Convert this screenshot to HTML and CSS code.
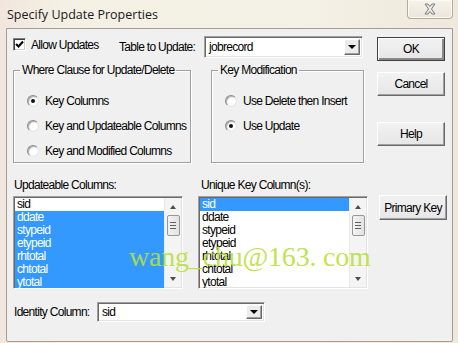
FILE: index.html
```html
<!DOCTYPE html>
<html>

<head>
    <title>Specify Update Properties</title>
    <link rel="stylesheet" href="styles.css">
</head>

<body>
    <div class="window">
        <div class="titlebar">
            <span class="title">Specify Update Properties</span>
            <div class="close">
                <svg width="14" height="12" viewBox="0 0 14 12">
                    <path d="M2 1 L5 1 L7 3.5 L9 1 L12 1 L8.5 6 L12 11 L9 11 L7 8.5 L5 11 L2 11 L5.5 6 Z" fill="#e8e8e8" stroke="#7c7c7c" stroke-width="1" stroke-linejoin="round" />
                </svg>
            </div>
        </div>
        <div class="client">
            <div class="row row-top">
                <label class="allow">
                    <span class="checkbox">
                        <svg width="9" height="9" viewBox="0 0 9 9">
                            <path d="M1 4 L3.5 6.5 L8 1.5" fill="none" stroke="#000" stroke-width="2" />
                        </svg>
                    </span>
                    Allow Updates
                </label>
                <span class="field-label table-label">Table to Update:</span>
                <div class="combo table-combo">
                    <span class="combo-value">jobrecord</span>
                    <span class="combo-btn"><span class="arrow-down"></span></span>
                </div>
                <button class="btn btn-default">OK</button>
            </div>

            <div class="row row-groups">
                <fieldset class="group where">
                    <legend>Where Clause for Update/Delete</legend>
                    <div class="options">
                        <label class="option"><span class="radio checked"></span>Key Columns</label>
                        <label class="option"><span class="radio"></span>Key and Updateable Columns</label>
                        <label class="option"><span class="radio"></span>Key and Modified Columns</label>
                    </div>
                </fieldset>
                <fieldset class="group keymod">
                    <legend>Key Modification</legend>
                    <div class="options">
                        <label class="option"><span class="radio"></span>Use Delete then Insert</label>
                        <label class="option"><span class="radio checked"></span>Use Update</label>
                    </div>
                </fieldset>
                <div class="btn-stack">
                    <button class="btn">Cancel</button>
                    <button class="btn btn-help">Help</button>
                </div>
            </div>

            <div class="row row-lists">
                <div class="list-col">
                    <div class="list-label">Updateable Columns:</div>
                    <div class="listbox">
                        <ul class="items">
                            <li>sid</li>
                            <li class="sel">ddate</li>
                            <li class="sel">stypeid</li>
                            <li class="sel">etypeid</li>
                            <li class="sel">rhtotal</li>
                            <li class="sel">chtotal</li>
                            <li class="sel">ytotal</li>
                        </ul>
                        <div class="scrollbar">
                            <span class="arrow-up"></span>
                            <span class="thumb"><i></i><i></i><i></i></span>
                            <span class="arrow-dn"></span>
                        </div>
                    </div>
                </div>
                <div class="list-col list-right">
                    <div class="list-label">Unique Key Column(s):</div>
                    <div class="listbox">
                        <ul class="items">
                            <li class="sel">sid</li>
                            <li>ddate</li>
                            <li>stypeid</li>
                            <li>etypeid</li>
                            <li>rhtotal</li>
                            <li>chtotal</li>
                            <li>ytotal</li>
                        </ul>
                        <div class="scrollbar">
                            <span class="arrow-up"></span>
                            <span class="thumb"><i></i><i></i><i></i></span>
                            <span class="arrow-dn"></span>
                        </div>
                    </div>
                </div>
                <button class="btn btn-pk">Primary Key</button>
            </div>

            <div class="row row-identity">
                <span class="field-label identity-label">Identity Column:</span>
                <div class="combo identity-combo">
                    <span class="combo-value">sid</span>
                    <span class="combo-btn"><span class="arrow-down"></span></span>
                </div>
            </div>
        </div>
        <div class="watermark">wang_chu@163. com</div>
    </div>
</body>

</html>
```

FILE: styles.css
```css
* {
    box-sizing: border-box;
}

body {
    margin: 0;
    background: #f3efe3;
    font-family: "Liberation Sans", Arial, sans-serif;
    font-size: 12px;
    letter-spacing: -0.7px;
    color: #000;
}

.window {
    position: relative;
    width: 458px;
    height: 343px;
    background: linear-gradient(90deg, #f1e6de 0, #f4f0e4 60px, #f4f1e6 300px, #efe8dc 458px);
    overflow: hidden;
}

/* title bar */
.titlebar {
    height: 28px;
    display: flex;
    align-items: flex-start;
}

.title {
    font-family: "Open Sans", "Noto Sans", sans-serif;
    font-size: 12.5px;
    letter-spacing: 0;
    color: #1a1a1a;
    margin: 6px 0 0 7px;
}

.close {
    margin-left: auto;
    margin-right: 5px;
    width: 46px;
    height: 19px;
    border: 1px solid #b3ab9c;
    border-top: 0;
    border-radius: 0 0 4px 4px;
    background: linear-gradient(#f6f3ec, #ece6da);
    box-shadow: inset 0 0 0 1px #fbf9f4;
    display: flex;
    align-items: center;
    justify-content: center;
}

/* client area */
.client {
    margin-left: 6px;
    width: 447px;
    height: 314px;
    border: 1px solid #a59d90;
    border-radius: 0 0 2px 2px;
    background: #f0f0f0;
    padding-left: 6px;
}

.row {
    display: flex;
    align-items: flex-start;
    white-space: nowrap;
}

.row-top {
    margin-top: 7px;
    height: 24px;
}

.allow {
    display: flex;
    align-items: center;
    width: 106px;
    margin-top: 2px;
    height: 13px;
}

.checkbox {
    width: 13px;
    height: 13px;
    margin-right: 5px;
    background: #fff;
    border: 1px solid;
    border-color: #808080 #fff #fff #808080;
    box-shadow: inset 1px 1px 0 #404040, inset -1px -1px 0 #d4d0c8;
    display: flex;
    align-items: center;
    justify-content: center;
}

.field-label {
    line-height: 14px;
}

.table-label {
    width: 85px;
    margin-top: 4px;
}

/* combo boxes */
.combo {
    display: flex;
    align-items: center;
    background: #fff;
    border: 1px solid;
    border-color: #a0a0a0 #fff #fff #a0a0a0;
    box-shadow: inset 1px 1px 0 #696969, inset -1px -1px 0 #e3e3e3;
    padding: 2px;
}

.combo-value {
    flex: 1;
    padding-left: 2px;
}

.combo-btn {
    width: 16px;
    height: 100%;
    background: #ececec;
    border: 1px solid;
    border-color: #fff #696969 #696969 #fff;
    box-shadow: inset -1px -1px 0 #a0a0a0;
    display: flex;
    align-items: center;
    justify-content: center;
}

.arrow-down {
    width: 0;
    height: 0;
    border-left: 4px solid transparent;
    border-right: 4px solid transparent;
    border-top: 4px solid #000;
}

.table-combo {
    width: 159px;
    height: 22px;
}

/* buttons */
.btn {
    font-family: inherit;
    font-size: 12px;
    letter-spacing: -0.7px;
    color: #000;
    width: 68px;
    height: 24px;
    padding: 0;
    background: linear-gradient(#f2f2f2, #e6e6e6);
    border: 1px solid;
    border-color: #fff #696969 #696969 #fff;
    box-shadow: inset -1px -1px 0 #a0a0a0;
}

.btn-default {
    margin-left: 14px;
    margin-top: 1px;
    border: 1px solid #404040;
    box-shadow: inset 1px 1px 0 #fff, inset -2px -2px 0 #8a8a8a;
}

/* group boxes */
.row-groups {
    margin-top: 3px;
}

.group {
    margin: 0;
    padding: 0;
    height: 100px;
    border: 1px solid #a0a0a0;
    box-shadow: inset 1px 1px 0 #fff, 1px 1px 0 #fff;
}

.group legend {
    margin-left: 6px;
    padding: 0 2px;
    line-height: 14px;
}

.where {
    width: 178px;
}

.keymod {
    width: 153px;
    margin-left: 20px;
}

.options {
    padding: 11px 0 0 13px;
}

.option {
    display: flex;
    align-items: center;
    height: 25px;
}

.radio {
    flex: none;
    width: 12px;
    height: 12px;
    margin-right: 6px;
    border-radius: 50%;
    border: 1px solid;
    border-color: #8c8c8c #e6e6e6 #e6e6e6 #8c8c8c;
    background: radial-gradient(circle at 60% 60%, #fff 30%, #e0e0e0 100%);
    box-shadow: inset 1px 1px 0 #b0b0b0;
    position: relative;
}

.radio.checked::after {
    content: "";
    position: absolute;
    left: 3px;
    top: 3px;
    width: 4px;
    height: 4px;
    border-radius: 50%;
    background: #111;
}

.btn-stack {
    margin-left: 13px;
    margin-top: 9px;
    display: flex;
    flex-direction: column;
    gap: 26px;
}

.btn-stack .btn {
    height: 24px;
}

/* list boxes */
.row-lists {
    margin-top: 15px;
}

.list-label {
    line-height: 14px;
    padding-left: 1px;
}

.list-right {
    margin-left: 15px;
}

.list-right .list-label {
    padding-left: 3px;
}

.listbox {
    margin-top: 4px;
    width: 170px;
    height: 93px;
    display: flex;
    background: #fff;
    border: 1px solid;
    border-color: #a0a0a0 #fff #fff #a0a0a0;
    box-shadow: inset 1px 1px 0 #696969, inset -1px -1px 0 #e3e3e3;
    padding: 1px;
    overflow: hidden;
}

.items {
    list-style: none;
    margin: 0;
    padding: 0;
    flex: 1;
}

.items li {
    height: 13px;
    line-height: 13px;
    padding-left: 2px;
}

.items li.sel {
    background: #3399ff;
    color: #fff;
}

.scrollbar {
    width: 17px;
    background: #f4f4f4;
    border-left: 1px solid #eaeaea;
    display: flex;
    flex-direction: column;
    align-items: center;
    padding-top: 7px;
}

.arrow-up,
.arrow-dn {
    width: 0;
    height: 0;
    border-left: 3.5px solid transparent;
    border-right: 3.5px solid transparent;
}

.arrow-up {
    border-bottom: 4px solid #4d4d4d;
}

.arrow-dn {
    margin-top: auto;
    margin-bottom: 6px;
    border-top: 4px solid #4d4d4d;
}

.thumb {
    margin-top: 6px;
    width: 13px;
    height: 21px;
    border: 1px solid #979797;
    border-radius: 2px;
    background: linear-gradient(90deg, #f3f3f3, #e2e2e2);
    display: flex;
    flex-direction: column;
    align-items: center;
    justify-content: center;
    gap: 2px;
}

.thumb i {
    width: 6px;
    height: 1px;
    background: #606060;
}

.btn-pk {
    margin-left: 11px;
    margin-top: 17px;
    height: 25px;
}

/* identity */
.row-identity {
    margin-top: 13px;
    align-items: center;
}

.identity-label {
    width: 84px;
    padding-left: 1px;
}

.identity-combo {
    width: 168px;
    height: 20px;
}

.watermark {
    position: absolute;
    left: 129px;
    top: 241px;
    font-family: "Liberation Serif", serif;
    font-size: 28px;
    letter-spacing: -0.2px;
    color: rgba(184, 224, 56, 0.9);
    white-space: pre;
}
```
